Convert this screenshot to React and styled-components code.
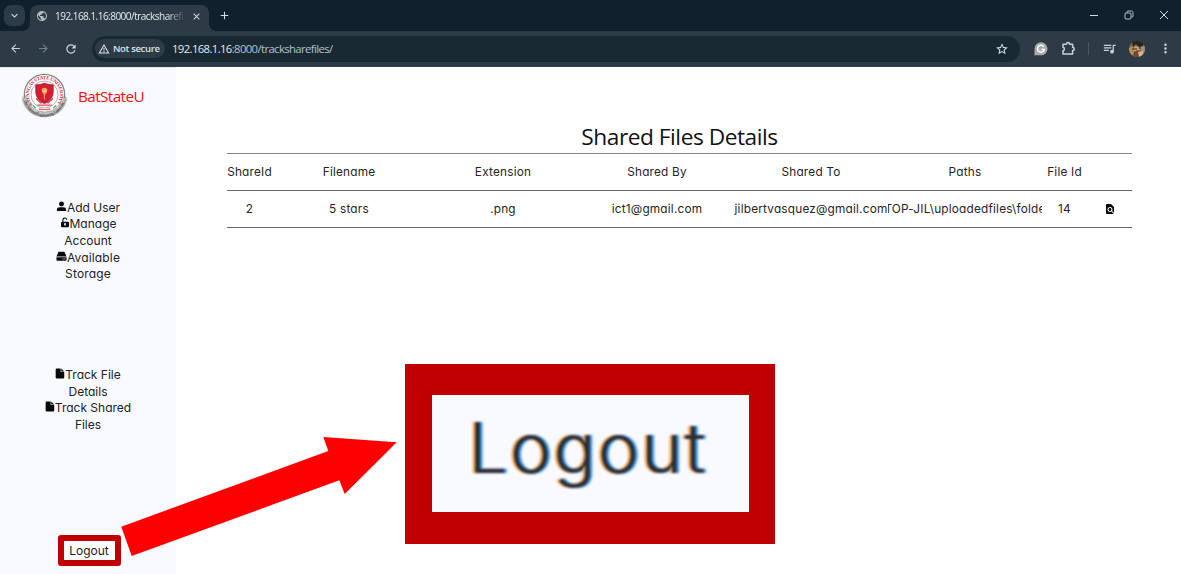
import React from "react";
import styled, { createGlobalStyle } from "styled-components";
import {
  MdArrowBack, MdArrowForward, MdRefresh, MdWarningAmber, MdStarOutline,
  MdQueueMusic, MdMoreVert, MdPublic, MdClose, MdAdd, MdKeyboardArrowDown, MdFindInPage,
} from "react-icons/md";

const Global = createGlobalStyle`
  * { box-sizing: border-box; }
  body { margin: 0; background: #fff; overflow: hidden; }
  svg { display: block; flex: none; }
`;

const geometric = `"Inter", "Liberation Sans", sans-serif`;
const humanist = `"Open Sans", "Noto Sans", sans-serif`;

const Window = styled.div`
  position: relative;
  display: flex;
  flex-direction: column;
  width: 1181px;
  height: 574px;
  overflow: hidden;
  background: #fff;
`;

const TabStrip = styled.div`
  display: flex;
  height: 31px;
  padding: 5px 12px 0 4px;
  background: #10202c;
  color: #d5dde2;
`;

const TabSearch = styled.div`
  display: grid;
  place-items: center;
  width: 21px;
  height: 21px;
  margin-right: 5px;
  border-radius: 7px;
  background: #2c3b46;
`;

const Tab = styled.div`
  position: relative;
  display: flex;
  align-items: center;
  width: 179px;
  height: 26px;
  padding: 0 7px 4px 6px;
  border-radius: 8px 8px 0 0;
  background: #2c3b46;
  &::before, &::after {
    content: "";
    position: absolute;
    bottom: 0;
    width: 7px;
    height: 7px;
  }
  &::before { left: -7px; background: radial-gradient(circle at 0 0, #10202c 6.5px, #2c3b46 7px); }
  &::after { right: -7px; background: radial-gradient(circle at 100% 0, #10202c 6.5px, #2c3b46 7px); }
`;

const TabTitle = styled.span`
  width: 129px;
  margin: 0 7px 0 7px;
  white-space: nowrap;
  font: 10px/16px ${humanist};
  letter-spacing: -0.52px;
  color: #e6ebee;
  mask-image: linear-gradient(to right, #000 112px, transparent 130px);
`;

const NewTab = styled.div`
  padding: 4px 0 0 9px;
`;

const WindowButtons = styled.div`
  display: flex;
  align-items: center;
  gap: 25px;
  height: 20px;
  margin-left: auto;
`;

const Toolbar = styled.div`
  display: flex;
  align-items: center;
  height: 36px;
  padding: 0 9px 1px 9px;
  background: #2c3b46;
  color: #c5d3dc;
`;

const NavButtons = styled.div`
  display: flex;
  flex: none;
  gap: 14.5px;
  width: 83px;
  & > :nth-child(2) { color: #71808a; }
`;

const AddressBar = styled.div`
  display: flex;
  flex: none;
  align-items: center;
  width: 928px;
  height: 26px;
  padding: 0 11px 0 3px;
  border-radius: 13px;
  background: #192934;
  color: #dce4e9;
`;

const SecurityChip = styled.div`
  display: flex;
  align-items: center;
  gap: 3px;
  width: 70px;
  height: 19px;
  padding-left: 3px;
  border-radius: 10px;
  background: #2c3b46;
  font: 600 9.5px/18px ${humanist};
  letter-spacing: -0.33px;
  white-space: nowrap;
`;

const Url = styled.span`
  flex: 1;
  padding-left: 7px;
  font: 11.3px/20px ${humanist};
  letter-spacing: -0.61px;
  color: #b3c1c9;
  b { font-weight: 400; color: #e4eaee; }
`;

const Extensions = styled.div`
  display: flex;
  align-items: center;
  flex: 1;
  gap: 12.5px;
  padding-left: 14px;
`;

const Divider = styled.i`
  width: 1px;
  height: 13px;
  background: #46565f;
`;

const Page = styled.div`
  display: flex;
  flex: 1;
`;

const Sidebar = styled.aside`
  display: flex;
  flex-direction: column;
  width: 176px;
  border-top: 1px solid #e3e7ee;
  background: #f9faff;
  color: #222;
`;

const Brand = styled.div`
  display: flex;
  align-items: center;
  gap: 11px;
  height: 56px;
  padding: 0 0 2px 22px;
  font: 15.3px/20px ${humanist};
  letter-spacing: -0.6px;
  color: #ff0a0a;
  span { padding-top: 2px; }
`;

const Menu = styled.nav`
  display: flex;
  flex-direction: column;
  align-items: center;
  margin-top: ${(p) => p.$top}px;
  font: 12px/16.7px ${geometric};
  font-feature-settings: "cv11";
`;

const MenuItem = styled.a`
  display: flex;
  flex-direction: column;
  align-items: center;
`;

const MenuLine = styled.span`
  display: flex;
  align-items: flex-start;
  white-space: nowrap;
  letter-spacing: ${(p) => p.$track || 0}px;
  svg { margin-top: 1px; }
`;

const Logout = styled.a`
  display: grid;
  place-items: center;
  width: 63px;
  height: 31px;
  margin: 101px 0 0 58px;
  padding-right: 1px;
  border: 6px solid #c00000;
  border-radius: 3px;
  background: #fff;
  font: 12px/17px ${geometric};
`;

const Main = styled.main`
  width: 905px;
  margin-left: 51px;
  padding-top: 53px;
`;

const Title = styled.h1`
  margin: 0;
  height: 33px;
  text-align: center;
  font: 400 22.7px/33px ${humanist};
  letter-spacing: -0.46px;
  color: #111;
`;

const Table = styled.div`
  border-top: 1px solid #858585;
`;

const Row = styled.div`
  display: grid;
  grid-template-columns: 45px repeat(5, 154px) 45px 45px;
  align-items: center;
  height: 37px;
  border-bottom: 1px solid #666;
  font: 11.8px/18px ${geometric};
  font-feature-settings: "cv11";
  letter-spacing: 0.2px;
  color: #252525;
`;

const Cell = styled.div`
  display: flex;
  justify-content: center;
  overflow: ${(p) => (p.$clip ? "hidden" : "visible")};
  white-space: nowrap;
`;

const Arrow = styled.svg`
  position: absolute;
  left: 0;
  top: 0;
  pointer-events: none;
`;

const Callout = styled.div`
  position: absolute;
  left: 405px;
  top: 364px;
  display: grid;
  place-items: center;
  width: 370px;
  height: 180px;
  padding: 0 5px 12px 0;
  border: solid #c00000;
  border-width: 31.5px 26px 32px 27px;
  background: #f9faff;
  span {
    font: 300 70px/90px ${geometric};
    letter-spacing: 2px;
    color: #2b2e38;
    text-shadow: -2.5px 0 1px #eda650, 2.5px 0 1px #3c9cee;
    filter: blur(0.9px);
  }
`;

const icon = { width: 11, height: 11, viewBox: "0 0 12 12", fill: "#080808" };

const UserIcon = () => (
  <svg {...icon}><circle cx="6" cy="3.2" r="2.7" /><path d="M1 11V9.5Q1 6.8 4 6.8H8Q11 6.8 11 9.5V11Z" /></svg>
);
const UnlockIcon = () => (
  <svg {...icon} width="10">
    <path d="M3.5 6V3a2.3 2.3 0 0 1 4.6-.3" fill="none" stroke="#080808" strokeWidth="1.3" />
    <path fillRule="evenodd" d="M2.5 5H9.5Q10.8 5 10.8 6.2V10.4Q10.8 11.7 9.5 11.7H2.5Q1.2 11.7 1.2 10.4V6.2Q1.2 5 2.5 5ZM6 6.7A1.2 1.2 0 0 0 5.5 9V10.3H6.5V9A1.2 1.2 0 0 0 6 6.7Z" />
  </svg>
);
const DriveIcon = () => (
  <svg {...icon}>
    <path d="M2.8.7H9.2L11.5 6H.5Z" />
    <path fillRule="evenodd" d="M.5 6.7H11.5V9.8Q11.5 10.7 10.6 10.7H1.4Q.5 10.7.5 9.8ZM7.2 8.2V9.2H8.2V8.2ZM9.2 8.2V9.2H10.2V8.2Z" />
  </svg>
);
const FileIcon = () => (
  <svg {...icon} width="10" viewBox="0.3 0.3 10.4 11.2">
    <path d="M2 .8H6.2V4.4H9.9V10Q9.9 11.2 8.8 11.2H2Q1 11.2 1 10V1.8Q1 .8 2 .8Z" /><path d="M6.8.8L9.9 3.8H6.8Z" />
  </svg>
);

const PuzzleIcon = () => (
  <svg width="15" height="15" viewBox="0 0 15 15" fill="none" stroke="#c5d3dc" strokeWidth="1.5" strokeLinejoin="round">
    <path d="M2 3.2H5.4A1.6 1.6 0 0 1 8.6 3.2H11.6V6.3A1.6 1.6 0 0 1 11.6 9.5V13H2V9.8A1.8 1.8 0 0 0 2 6.3Z" />
  </svg>
);

const Seal = () => (
  <svg width="45" height="45" viewBox="0 0 46 46">
    <circle cx="23" cy="22" r="20.6" fill="#fff" stroke="#838383" strokeWidth="1.3" />
    <circle cx="23" cy="22" r="13.8" fill="#fff" stroke="#9b8589" strokeWidth="0.7" />
    <defs>
      <path id="sealTop" d="M11.1 32.5A15.8 15.8 0 1 1 34.9 32.5" />
      <path id="sealBottom" d="M2.2 28A21.4 21.4 0 0 0 43.8 28" />
    </defs>
    <text fontFamily="Liberation Serif, serif" fontSize="5.1" fontWeight="700" fill="#d6283b">
      <textPath href="#sealTop" textLength="70">BATANGAS STATE UNIVERSITY</textPath>
    </text>
    <path d="M2 26Q6 42 23 42.6Q40 42 44 26" fill="none" stroke="#c4c4c4" strokeWidth="4.8" />
    <path d="M.7 24.8L4.6 24.2Q8 39.5 23 40Q38 39.5 41.4 24.2L45.3 24.8Q41 44.2 23 45Q5 44.2.7 24.8Z" fill="none" stroke="#777" strokeWidth=".6" />
    <text fontFamily="Liberation Serif, serif" fontSize="4" fontWeight="700" fill="#444">
      <textPath href="#sealBottom" textLength="54">The National Engineering University</textPath>
    </text>
    <path d="M14 12Q19 12.3 23 10.2Q27 12.3 32 12V20Q31.5 27.5 23 31.5Q14.5 27.5 14 20Z" fill="#d51d32" stroke="#8e1725" strokeWidth=".6" />
    <path d="M20 16.5Q23 13.5 26 16.5L25 20.5L23.6 22V27H22.4V22L21 20.5Z" fill="#f3a160" />
    <path d="M20.5 18.5H25.5" stroke="#ffe2b0" strokeWidth="1" />
    <path d="M14.5 26L20 31M31.5 26L26 31" stroke="#d34750" strokeWidth="1.6" />
    <path d="M15.5 33H30.5" stroke="#d97980" strokeWidth="1.8" />
    <path d="M11 33L14 36M35 33L32 36" stroke="#58b474" strokeWidth="1.6" />
    <path d="M17 36.8Q23 38.2 29 36.8" fill="none" stroke="#d9727a" strokeWidth="1.4" />
  </svg>
);

const Grammarly = () => (
  <svg width="14" height="14" viewBox="0 0 14 14">
    <path d="M.5 13.3V6.8A6.5 6.5 0 1 1 7 13.3Z" fill="#a9acac" />
    <path d="M9.8 4.6A3.5 3.5 0 1 0 10.4 7.4H7.6" fill="none" stroke="#fff" strokeWidth="1.5" />
  </svg>
);

const Avatar = () => (
  <svg width="16" height="16" viewBox="0 0 16 16">
    <defs><clipPath id="face"><circle cx="8" cy="8" r="8" /></clipPath></defs>
    <g clipPath="url(#face)">
      <path d="M0 0H16V16H0Z" fill="#78674f" />
      <path d="M0 7L4 5L5 12L2 15H0Z" fill="#b88e55" />
      <path d="M3 0H14V5L10 6L7 3L4 6Z" fill="#25231c" />
      <path d="M6 5L10 6L11 9L7 11L4 9Z" fill="#c3a17c" />
      <path d="M11 6L16 5V12L12 10Z" fill="#a8916f" />
      <path d="M5 11L9 9L12 12L9 16H5Z" fill="#7c4030" />
      <path d="M9 11L14 10L15 15L10 16Z" fill="#d0b78d" />
      <path d="M3 8H8M10 7H12" stroke="#382d24" strokeWidth="1" />
    </g>
  </svg>
);

const headings = ["ShareId", "Filename", "Extension", "Shared By", "Shared To", "Paths", "File Id", ""];

export default function App() {
  return (
    <Window>
      <Global />
      <TabStrip>
        <TabSearch><MdKeyboardArrowDown size={13} /></TabSearch>
        <Tab>
          <MdPublic size={12} color="#b6bcc0" />
          <TabTitle>192.168.1.16:8000/tracksharefil</TabTitle>
          <MdClose size={11} />
        </Tab>
        <NewTab><MdAdd size={13} /></NewTab>
        <WindowButtons>
          <svg width="10" height="10" viewBox="0 0 10 10"><path d="M1 5.5H9" stroke="#d5dde2" /></svg>
          <svg width="10" height="10" viewBox="0 0 10 10" fill="none" stroke="#b7c0c6">
            <rect x="1" y="3" width="6" height="6" rx="1" /><path d="M3 2.5V2Q3 1 4 1H7.5Q9 1 9 2.5V6Q9 7 8 7H7.5" />
          </svg>
          <svg width="10" height="10" viewBox="0 0 10 10"><path d="M1 1L9 9M9 1L1 9" stroke="#d5dde2" /></svg>
        </WindowButtons>
      </TabStrip>
      <Toolbar>
        <NavButtons><MdArrowBack size={13} /><MdArrowForward size={13} /><MdRefresh size={14} /></NavButtons>
        <AddressBar>
          <SecurityChip><MdWarningAmber size={12} />Not secure</SecurityChip>
          <Url><b>192.168.1.16</b>:8000/tracksharefiles/</Url>
          <MdStarOutline size={14} />
        </AddressBar>
        <Extensions>
          <Grammarly />
          <PuzzleIcon />
          <Divider />
          <MdQueueMusic size={15} />
          <Avatar />
          <MdMoreVert size={15} />
        </Extensions>
      </Toolbar>
      <Page>
        <Sidebar>
          <Brand><Seal /><span>BatStateU</span></Brand>
          <Menu $top={75.6}>
            <MenuItem><MenuLine><UserIcon />Add User</MenuLine></MenuItem>
            <MenuItem><MenuLine><UnlockIcon />Manage</MenuLine><MenuLine>Account</MenuLine></MenuItem>
            <MenuItem><MenuLine $track={0.15}><DriveIcon />Available</MenuLine><MenuLine $track={0.15}>Storage</MenuLine></MenuItem>
          </Menu>
          <Menu $top={83.9}>
            <MenuItem><MenuLine><FileIcon />Track File</MenuLine><MenuLine>Details</MenuLine></MenuItem>
            <MenuItem><MenuLine><FileIcon />Track Shared</MenuLine><MenuLine>Files</MenuLine></MenuItem>
          </Menu>
          <Logout>Logout</Logout>
        </Sidebar>
        <Main>
          <Title>Shared Files Details</Title>
          <Table>
            <Row>{headings.map((label) => <Cell key={label}>{label}</Cell>)}</Row>
            <Row>
              <Cell>2</Cell>
              <Cell>5 stars</Cell>
              <Cell>.png</Cell>
              <Cell>ict1@gmail.com</Cell>
              <Cell>jilbertvasquez@gmail.com</Cell>
              <Cell $clip>TOP-JIL\uploadedfiles\folde</Cell>
              <Cell>14</Cell>
              <Cell><MdFindInPage size={12} color="#080808" /></Cell>
            </Row>
          </Table>
        </Main>
      </Page>
      <Arrow width="1181" height="574" viewBox="0 0 1181 574">
        <path d="M121.3 526.7L328.3 451L323.3 437L396.7 442.3L344.7 494L339.3 480.3L131.7 556Z" fill="#f00" />
      </Arrow>
      <Callout><span>Logout</span></Callout>
    </Window>
  );
}
